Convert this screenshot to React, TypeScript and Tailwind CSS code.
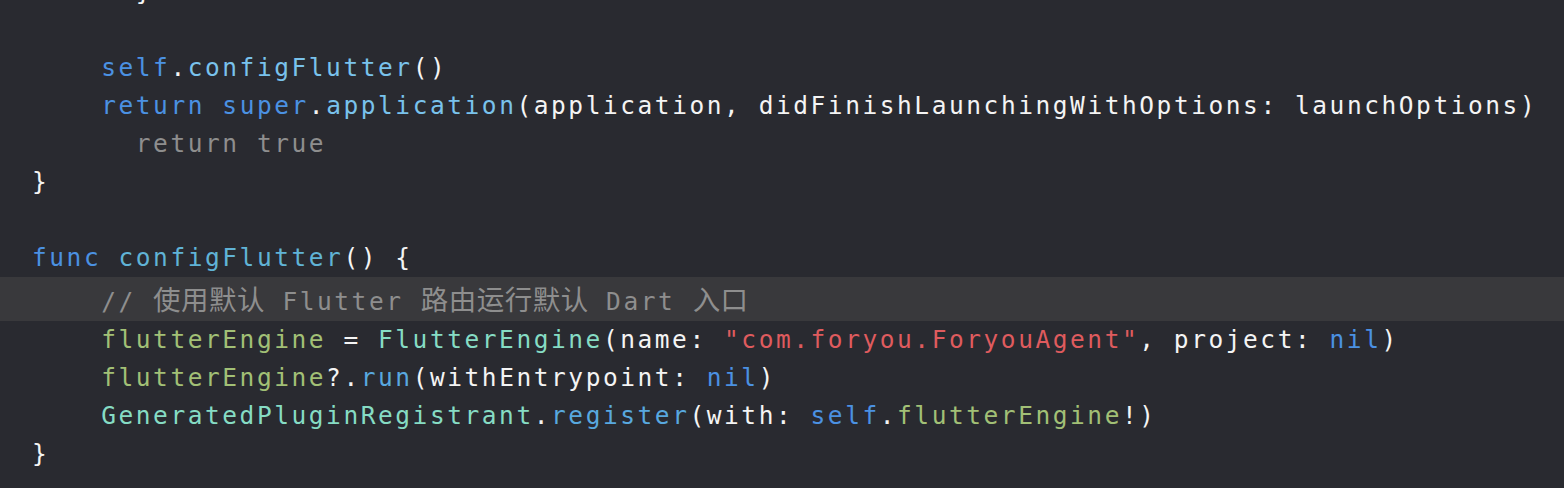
type Tok = [string, string];

const kw = "text-[#4b91e2]";
const call = "text-[#79c2ec]";
const decl = "text-[#60b3d6]";
const meth = "text-[#58a8df]";
const plain = "text-[#f4f4f4]";
const gray = "text-[#8e8e8e]";
const prop = "text-[#a2c076]";
const type = "text-[#86dcc4]";
const str = "text-[#df5b5e]";

const lines: { indent: number; toks: Tok[]; hl?: boolean }[] = [
  { indent: 6, toks: [["}", plain]] },
  { indent: 0, toks: [] },
  {
    indent: 4,
    toks: [
      ["self", kw],
      [".", plain],
      ["configFlutter", call],
      ["()", plain],
    ],
  },
  {
    indent: 4,
    toks: [
      ["return", kw],
      [" ", plain],
      ["super", kw],
      [".", plain],
      ["application", call],
      ["(application, didFinishLaunchingWithOptions: launchOptions)", plain],
    ],
  },
  { indent: 6, toks: [["return true", gray]] },
  { indent: 0, toks: [["}", plain]] },
  { indent: 0, toks: [] },
  {
    indent: 0,
    toks: [
      ["func", kw],
      [" ", plain],
      ["configFlutter", decl],
      ["() {", plain],
    ],
  },
  { indent: 4, toks: [], hl: true },
  {
    indent: 4,
    toks: [
      ["flutterEngine", prop],
      [" = ", plain],
      ["FlutterEngine", type],
      ["(name: ", plain],
      ['"com.foryou.ForyouAgent"', str],
      [", project: ", plain],
      ["nil", kw],
      [")", plain],
    ],
  },
  {
    indent: 4,
    toks: [
      ["flutterEngine", prop],
      ["?.", plain],
      ["run", meth],
      ["(withEntrypoint: ", plain],
      ["nil", kw],
      [")", plain],
    ],
  },
  {
    indent: 4,
    toks: [
      ["GeneratedPluginRegistrant", type],
      [".", plain],
      ["register", meth],
      ["(with: ", plain],
      ["self", kw],
      [".", plain],
      ["flutterEngine", prop],
      ["!)", plain],
    ],
  },
  { indent: 0, toks: [["}", plain]] },
];

function Cjk({ children }: { children: string }) {
  return (
    <span className="text-[27.5px] tracking-[0.5px] [font-family:'Noto_Sans_CJK_SC',sans-serif]">
      {children}
    </span>
  );
}

function Comment() {
  return (
    <span className={gray}>
      {"// "}
      <Cjk>使用默认</Cjk>
      {" Flutter "}
      <Cjk>路由运行默认</Cjk>
      {" Dart "}
      <Cjk>入口</Cjk>
    </span>
  );
}

export default function App() {
  return (
    <div className="h-[488px] w-[1564px] overflow-hidden bg-[#292a30]">
      <div className="-mt-[27px] flex flex-col text-[24.5px] tracking-[2.55px] whitespace-pre [font-family:'DejaVu_Sans_Mono',monospace]">
        {lines.map((l, i) => (
          <div
            key={i}
            className={
              l.hl
                ? "flex h-[44px] items-center bg-[#39393c] pl-[32px]"
                : "flex h-[38px] items-center pl-[32px]"
            }
          >
            <span>{" ".repeat(l.indent)}</span>
            {l.hl ? (
              <Comment />
            ) : (
              l.toks.map(([t, c], j) => (
                <span key={j} className={c}>
                  {t}
                </span>
              ))
            )}
          </div>
        ))}
      </div>
    </div>
  );
}
